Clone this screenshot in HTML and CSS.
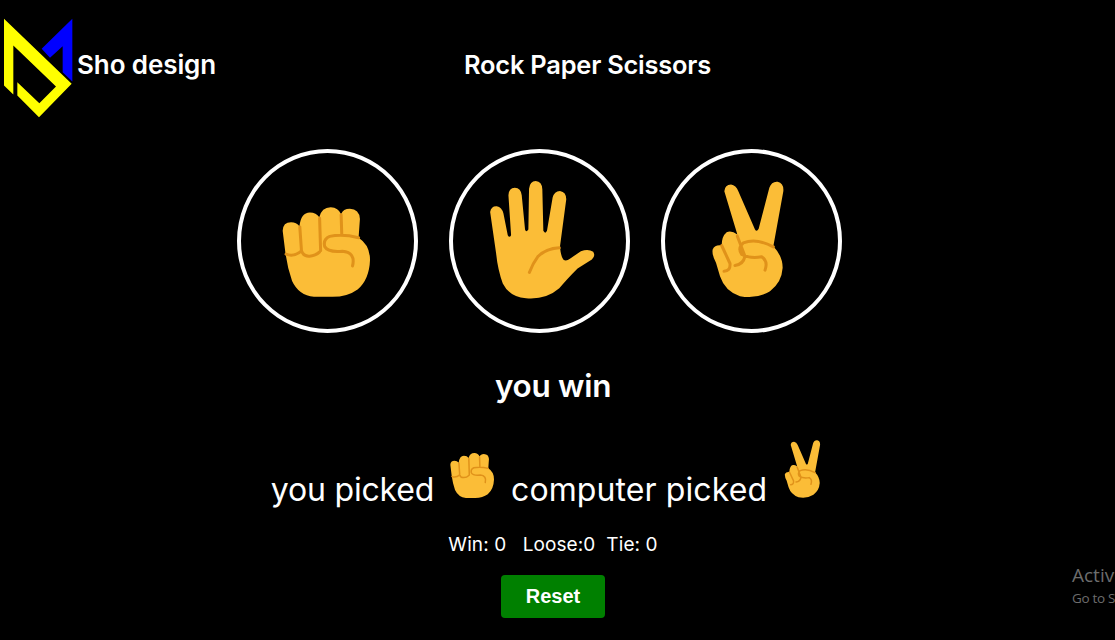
FILE: index.html
```html
<!DOCTYPE html>
<html lang="en">
<head>
  <meta charset="UTF-8">
  <meta name="viewport" content="width=device-width, initial-scale=1.0">
  <title>Rock Paper Scissors</title>
  <link rel="stylesheet" href="styles.css">
</head>
<body>
  <svg class="defs" aria-hidden="true">
    <symbol id="rock" viewBox="160 205 262 267">
      <path class="skin" d="M162 275 Q163 250 187 250 Q203 250 212 262 Q216 222 243 221 Q262 221 271 235 Q278 205 305 205 Q328 206 336 226 Q342 210 362 210 Q390 211 392 240 L388 296 Q422 318 422 362 Q420 420 385 450 Q355 472 310 472 L255 472 Q210 468 190 425 Q176 385 170 340 Z"/>
      <path class="line" d="M213 264 L218 335 Q224 352 242 351 Q260 350 272 338 M272 238 L275 335 M336 228 L338 288 M388 296 Q340 284 302 292 Q282 300 287 322 Q296 340 340 336 Q380 340 370 380 M172 345 Q196 354 218 335"/>
    </symbol>
    <symbol id="paper" viewBox="152 122 318 355">
      <path class="skin" d="M152 215 Q155 197 172 198 Q187 200 192 220 L205 285 Q210 295 215 285 L207 165 Q208 142 226 142 Q245 143 247 165 L257 268 Q260 278 267 268 L269 145 Q272 122 289 122 Q308 123 309 147 L312 272 Q318 283 323 272 L340 172 Q345 152 362 152 Q381 155 381 177 L362 320 Q365 350 372 358 Q380 365 392 356 L425 333 Q448 325 462 335 Q470 348 458 358 L415 385 Q380 420 360 445 Q320 480 260 475 Q210 470 190 430 Q175 390 170 340 Z"/>
      <path class="line" d="M360 323 Q320 325 295 350 Q280 370 270 397"/>
    </symbol>
    <symbol id="scissors" viewBox="186 125 216 350">
      <path class="skin" d="M223 155 Q225 135 243 135 Q258 137 265 155 L315 270 Q320 278 326 268 L358 145 Q365 125 383 127 Q402 132 400 155 L370 320 Q398 350 398 385 Q395 430 360 455 Q320 480 270 470 Q225 455 210 410 L198 370 Q185 345 188 330 Q195 315 215 318 Q215 290 230 278 Q245 272 262 285 Z"/>
      <path class="line" d="M215 318 L240 372 Q242 395 222 395 M262 290 L285 350 Q280 375 255 378 M370 322 Q320 295 280 310 Q262 325 275 345 Q300 358 335 352 Q355 365 345 392"/>
    </symbol>
  </svg>

  <header class="top">
    <div class="brand">
      <svg class="logo" viewBox="9 54 210 297">
        <path fill="#ffff00" d="M12 55 L215 250 L117 350 L52 285 L52 245 L118 308 L168 258 L40 135 L40 282 L12 255 Z"/>
        <path fill="#0000ff" d="M125 145 L217 55 L217 243 L188 215 L188 137 L150 172 Z"/>
      </svg>
      <span class="brand-name">Sho design</span>
    </div>
    <h1 class="title">Rock Paper Scissors</h1>
  </header>

  <main class="game">
    <div class="choices">
      <button class="choice"><svg class="hand rock"><use href="#rock"/></svg></button>
      <button class="choice"><svg class="hand paper"><use href="#paper"/></svg></button>
      <button class="choice"><svg class="hand scissors"><use href="#scissors"/></svg></button>
    </div>
    <h2 class="result">you win</h2>
    <div class="picked">
      <span class="you">you picked</span>
      <svg class="mini rock-mini"><use href="#rock"/></svg>
      <span class="computer">computer picked</span>
      <svg class="mini scissors-mini"><use href="#scissors"/></svg>
    </div>
    <p class="score">Win: 0 &nbsp; Loose:0 &nbsp;Tie: 0</p>
    <button class="reset">Reset</button>
  </main>

  <div class="watermark">
    <div class="wm-big">Activ</div>
    <div class="wm-small">Go to S</div>
  </div>
</body>
</html>
```

FILE: styles.css
```css
html, body{
  height: 100%;
}
body{
  margin: 0;
  background-color: #000;
  color: #fff;
  font-family: Inter, "Noto Sans", sans-serif;
  overflow: hidden;
  position: relative;
}
.defs{
  display: none;
}
.skin{
  fill: #fbbd37;
}
.line{
  fill: none;
  stroke: #e0921a;
  stroke-width: 9;
  stroke-linecap: round;
  stroke-linejoin: round;
}
/* header */
.top{
  display: flex;
  align-items: center;
  padding: 18px 0 0 3px;
  height: 99px;
}
.brand{
  display: flex;
  align-items: center;
  width: 461px;
}
.logo{
  width: 70px;
  height: 100px;
}
.brand-name{
  margin-left: 4px;
  margin-bottom: 7px;
  font-size: 26px;
  font-weight: 600;
  letter-spacing: -0.1px;
}
.title{
  margin: 0 0 7px 0;
  font-size: 25.4px;
  font-weight: 600;
  letter-spacing: -0.2px;
}
/* game */
.game{
  display: flex;
  flex-direction: column;
  align-items: center;
}
.choices{
  display: flex;
  gap: 31px;
  margin-top: 32px;
  padding-right: 37px;
}
.choice{
  width: 181px;
  height: 184px;
  box-sizing: border-box;
  border: 4px solid #fff;
  border-radius: 50%;
  background: none;
  padding: 0;
  display: flex;
  align-items: center;
  justify-content: center;
}
.hand{
  display: block;
}
.rock{
  width: 88px;
  height: 90px;
  margin-top: 21px;
  margin-right: 2px;
}
.paper{
  width: 106px;
  height: 118px;
  margin-top: -3px;
  margin-left: 8px;
}
.scissors{
  width: 72px;
  height: 117px;
  margin-top: -4px;
  margin-right: 6px;
}
.result{
  margin: 31px 0 0 0;
  height: 44px;
  line-height: 44px;
  font-size: 31.5px;
  font-weight: 600;
  letter-spacing: -0.3px;
  padding-right: 9px;
}
.picked{
  display: flex;
  align-items: flex-end;
  margin-top: 32px;
  padding-right: 23px;
  font-size: 32px;
  font-weight: 400;
  line-height: 38px;
}
.you{
  letter-spacing: -0.2px;
}
.computer{
  letter-spacing: 0.1px;
}
.mini{
  display: block;
}
.rock-mini{
  width: 44px;
  height: 45px;
  margin: 0 17px 11px 16px;
}
.scissors-mini{
  width: 37px;
  height: 58px;
  margin: 0 0 11px 17px;
}
.score{
  margin: 23px 0 0 0;
  font-size: 19px;
  line-height: 26px;
  padding-right: 9px;
  letter-spacing: 0.1px;
}
.reset{
  margin-top: 17px;
  margin-right: 9px;
  width: 104px;
  height: 43px;
  border: none;
  border-radius: 4px;
  background-color: #008000;
  color: #fff;
  font-family: "Liberation Sans", sans-serif;
  font-size: 20px;
  font-weight: 700;
}
/* windows watermark */
.watermark{
  position: absolute;
  left: 1072px;
  top: 563px;
  white-space: nowrap;
  color: #6d6d6d;
  font-family: "Open Sans", sans-serif;
}
.wm-big{
  font-size: 19px;
  line-height: 25px;
}
.wm-small{
  font-size: 13.5px;
  line-height: 20px;
  letter-spacing: -0.3px;
}
```
